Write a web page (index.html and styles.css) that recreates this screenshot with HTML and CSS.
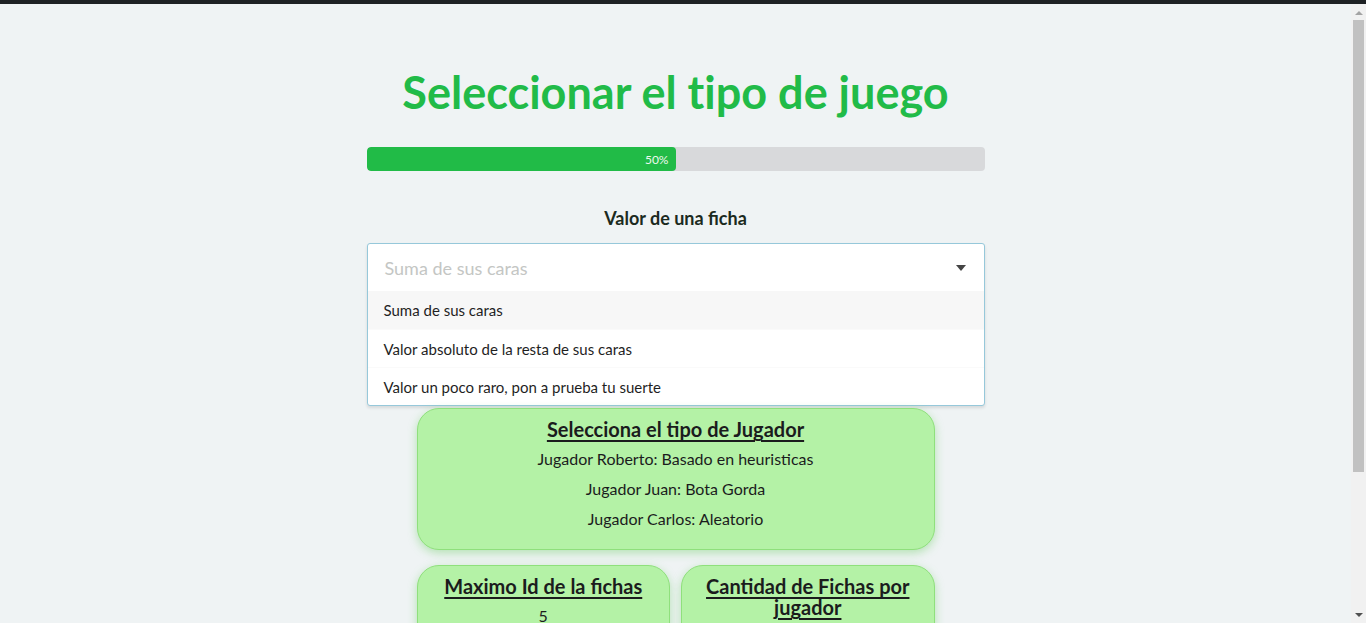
FILE: index.html
```html
<!DOCTYPE html>
<html lang="es">
<head>
<meta charset="utf-8">
<title>Seleccionar el tipo de juego</title>
<link rel="stylesheet" href="styles.css">
</head>
<body>
<div class="topbar"></div>
<div class="viewport">
  <div class="scroller">
    <main class="page">
      <h1 class="title">Seleccionar el tipo de juego</h1>
      <div class="progress">
        <div class="progress-fill" style="width:50%"><span class="progress-label">50%</span></div>
      </div>
      <h3 class="field-label">Valor de una ficha</h3>
      <div class="dropdown">
        <div class="dropdown-head">
          <span class="placeholder">Suma de sus caras</span>
          <svg class="caret" width="10" height="6" viewBox="0 0 10 6"><path d="M0 0H10L5 6Z" fill="#444"/></svg>
        </div>
        <ul class="menu">
          <li class="item selected">Suma de sus caras</li>
          <li class="item">Valor absoluto de la resta de sus caras</li>
          <li class="item">Valor un poco raro, pon a prueba tu suerte</li>
        </ul>
      </div>
      <section class="card card-wide">
        <h2 class="card-title">Selecciona el tipo de Jugador</h2>
        <p class="card-line">Jugador Roberto: Basado en heuristicas</p>
        <p class="card-line">Jugador Juan: Bota Gorda</p>
        <p class="card-line">Jugador Carlos: Aleatorio</p>
      </section>
      <div class="card-row">
        <section class="card">
          <h2 class="card-title">Maximo Id de la fichas</h2>
          <p class="card-value">5</p>
        </section>
        <section class="card">
          <h2 class="card-title">Cantidad de Fichas por jugador</h2>
          <p class="card-value">7</p>
        </section>
      </div>
    </main>
  </div>
  <div class="scrollbar" aria-hidden="true">
    <svg class="sb-arrow" width="8" height="4" viewBox="0 0 8 4"><path d="M0 4L4 0L8 4Z" fill="#a3a3a3"/></svg>
    <div class="sb-thumb"></div>
    <div class="sb-rest"></div>
    <svg class="sb-arrow sb-down" width="8" height="4" viewBox="0 0 8 4"><path d="M0 0H8L4 4Z" fill="#505050"/></svg>
  </div>
</div>
</body>
</html>
```
FILE: styles.css
```css
html, body {
  margin: 0;
  padding: 0;
  height: 100%;
  overflow: hidden;
}
body {
  background: #eff3f4;
  font-family: Lato, "Open Sans", sans-serif;
  color: #1b1c1d;
  display: flex;
  flex-direction: column;
}
.topbar {
  height: 4px;
  flex: none;
  background: #1e2124;
}
.viewport {
  flex: 1;
  display: flex;
  min-height: 0;
}
.scroller {
  flex: 1;
  overflow: hidden;
}
.scrollbar {
  flex: none;
  width: 15px;
  background: #f1f1f1;
  display: flex;
  flex-direction: column;
  align-items: center;
}
.sb-arrow {
  display: block;
  flex: none;
  margin-top: 7px;
  margin-bottom: 5px;
}
.sb-down {
  margin-top: 0;
  margin-bottom: 6px;
}
.sb-thumb {
  width: 11px;
  height: 452px;
  flex: none;
  background: #c1c1c1;
}
.sb-rest {
  flex: 1;
}
.page {
  width: 618px;
  margin: 0 auto;
  padding: 58px 0 60px;
}
.title {
  margin: 0;
  text-align: center;
  font-size: 45px;
  font-weight: 700;
  line-height: 60px;
  color: #21bb48;
  font-variant-ligatures: none;
}
.progress {
  margin-top: 25px;
  height: 24px;
  background: #d8d9db;
  border-radius: 4px;
  overflow: hidden;
}
.progress-fill {
  height: 100%;
  background: #21bb47;
  border-radius: 4px;
  display: flex;
  align-items: center;
  justify-content: flex-end;
}
.progress-label {
  color: #eef9ef;
  font-size: 12px;
  padding-right: 7px;
}
.field-label {
  margin: 35px 0 0;
  text-align: center;
  font-size: 18px;
  font-weight: 700;
  line-height: 24px;
  color: #1b2a1e;
}
.dropdown {
  margin-top: 13px;
  background: #fff;
  border: 1px solid #96c8da;
  border-radius: 3px;
  box-shadow: 0 2px 3px rgba(34, 36, 38, 0.12);
}
.dropdown-head {
  height: 47px;
  display: flex;
  align-items: center;
  justify-content: space-between;
  padding: 0 18px 0 17px;
}
.placeholder {
  font-size: 18px;
  color: #c4c6c4;
}
.caret {
  display: block;
}
.menu {
  list-style: none;
  margin: 0;
  padding: 0;
}
.item {
  height: 38px;
  display: flex;
  align-items: center;
  padding: 0 16px;
  font-size: 15px;
  color: #1f1f1f;
  border-top: 1px solid #fafafa;
  box-sizing: border-box;
}
.item:first-child {
  border-top: none;
}
.item.selected {
  background: #f7f7f7;
}
.card {
  background: #b4f2a6;
  border: 1px solid #8fe07c;
  border-radius: 22px;
  box-shadow: 0 3px 10px rgba(90, 200, 80, 0.4);
  text-align: center;
  box-sizing: border-box;
}
.card-wide {
  margin: 2px 50px 0;
  padding: 10px 16px 19px;
}
.card-title {
  margin: 0;
  font-size: 20px;
  font-weight: 700;
  line-height: 21px;
  text-decoration: underline;
  text-decoration-thickness: 2px;
  text-underline-offset: 3px;
  color: #1b1c1d;
}
.card-line {
  margin: 7px 0 0;
  font-size: 16px;
  line-height: 23px;
}
.card-row {
  display: grid;
  grid-template-columns: 1fr 1fr;
  gap: 11px;
  margin: 15px 50px 0;
}
.card-row .card {
  padding: 10px 14px 110px;
}
.card-value {
  margin: 8px 0 0;
  font-size: 16px;
  line-height: 22px;
}
```
